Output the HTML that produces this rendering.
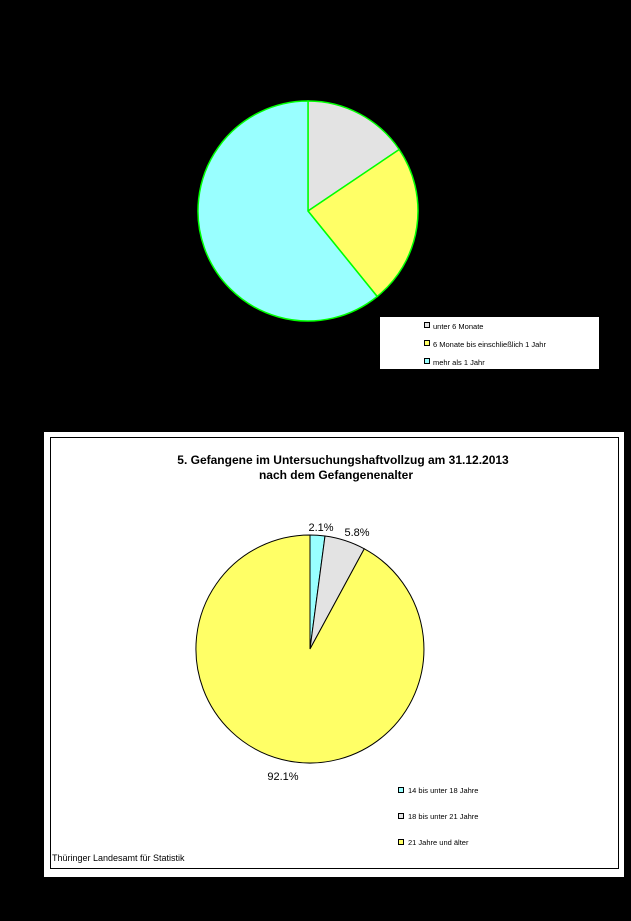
<!DOCTYPE html>
<html><head><meta charset="utf-8"><style>
html,body{margin:0;padding:0;background:#000;width:631px;height:921px;overflow:hidden;font-family:"Liberation Sans",Arial,sans-serif;}
</style></head><body>
<svg width="631" height="921" xmlns="http://www.w3.org/2000/svg" style="position:absolute;left:0;top:0">
<rect width="631" height="921" fill="#000"/>
<g stroke="#00ff00" stroke-width="1.5">
<path d="M308,211 L308,101 A110,110 0 0 1 399.2,149.5 Z" fill="#e3e3e3"/>
<path d="M308,211 L399.2,149.5 A110,110 0 0 1 377.2,296.5 Z" fill="#ffff66"/>
<path d="M308,211 L377.2,296.5 A110,110 0 1 1 308,101 Z" fill="#99ffff"/>
</g>
<rect x="380" y="317" width="219" height="52" fill="#fff"/>
<g stroke="#000" stroke-width="1">
<rect x="424.5" y="322.5" width="5" height="5" fill="#e3e3e3"/>
<rect x="424.5" y="340.5" width="5" height="5" fill="#ffff66"/>
<rect x="424.5" y="358.5" width="5" height="5" fill="#99ffff"/>
</g>
<g font-size="7.5" fill="#000">
<text x="433" y="329">unter 6 Monate</text>
<text x="433" y="347">6 Monate bis einschließlich 1 Jahr</text>
<text x="433" y="365">mehr als 1 Jahr</text>
</g>
<rect x="44" y="432" width="580" height="445" fill="#fff"/>
<rect x="50.5" y="437.5" width="568" height="431" fill="#fff" stroke="#000" stroke-width="1"/>
<g font-size="12" font-weight="bold" text-anchor="middle" fill="#000">
<text x="343" y="464">5. Gefangene im Untersuchungshaftvollzug am 31.12.2013</text>
<text x="336" y="479">nach dem Gefangenenalter</text>
</g>
<g stroke="#000" stroke-width="1">
<path d="M310,649 L310,535 A114,114 0 0 1 325,536 Z" fill="#99ffff"/>
<path d="M310,649 L325,536 A114,114 0 0 1 364.3,548.8 Z" fill="#e3e3e3"/>
<path d="M310,649 L364.3,548.8 A114,114 0 1 1 310,535 Z" fill="#ffff66"/>
</g>
<g font-size="11" fill="#000" text-anchor="middle">
<text x="321" y="531">2.1%</text>
<text x="357" y="536">5.8%</text>
<text x="283" y="780">92.1%</text>
</g>
<g stroke="#000" stroke-width="1">
<rect x="398.5" y="787.5" width="5" height="5" fill="#99ffff"/>
<rect x="398.5" y="813.5" width="5" height="5" fill="#e3e3e3"/>
<rect x="398.5" y="839.5" width="5" height="5" fill="#ffff66"/>
</g>
<g font-size="7.5" fill="#000">
<text x="408" y="793">14 bis unter 18 Jahre</text>
<text x="408" y="819">18 bis unter 21 Jahre</text>
<text x="408" y="845">21 Jahre und älter</text>
</g>
<text x="52" y="861" font-size="9" fill="#000">Thüringer Landesamt für Statistik</text>
</svg>
</body></html>
